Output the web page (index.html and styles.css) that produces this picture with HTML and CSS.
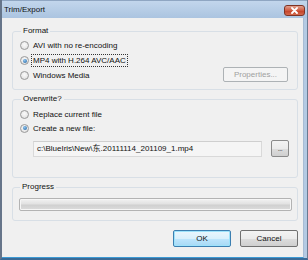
FILE: index.html
```html
<!DOCTYPE html>
<html>
<head>
<meta charset="utf-8">
<link rel="stylesheet" href="styles.css">
</head>
<body>
<div class="window">
  <div class="titlebar">
    <span class="title">Trim/Export</span>
    <span class="close"><svg width="11" height="7" viewBox="0 0 11 7"><path d="M3 1 L8 6 M8 1 L3 6" stroke="#fff" stroke-width="1.8" stroke-linecap="round"/></svg></span>
  </div>
  <div class="client">
    <fieldset class="group format">
      <legend>Format</legend>
      <div class="row"><span class="radio"></span><span class="label">AVI with no re-encoding</span></div>
      <div class="row"><span class="radio checked"></span><span class="label focus">MP4 with H.264 AVC/AAC</span></div>
      <div class="row last"><span class="radio"></span><span class="label">Windows Media</span><span class="btn disabled props">Properties...</span></div>
    </fieldset>
    <fieldset class="group overwrite">
      <legend>Overwrite?</legend>
      <div class="row r14"><span class="radio"></span><span class="label">Replace current file</span></div>
      <div class="row r14"><span class="radio checked"></span><span class="label">Create a new file:</span></div>
      <div class="filerow">
        <div class="textbox">c:\BlueIris\New\东.20111114_201109_1.mp4</div>
        <span class="btn dots">...</span>
      </div>
    </fieldset>
    <fieldset class="group progress">
      <legend>Progress</legend>
      <div class="bar"></div>
    </fieldset>
    <div class="buttons">
      <span class="btn ok">OK</span>
      <span class="btn">Cancel</span>
    </div>
  </div>
</div>
</body>
</html>
```
FILE: styles.css
```css
html, body {
  margin: 0;
  padding: 0;
  background: #f0f0f0;
}
body {
  font-family: "Liberation Sans", Arial, sans-serif;
  font-size: 8px;
  color: #111;
}
.window {
  width: 308px;
  height: 260px;
  box-sizing: border-box;
  display: flex;
  flex-direction: column;
  background: #b4cae3;
  border-left: 2px solid #66758a;
  border-right: 1px solid #6a7a90;
  border-bottom: 2px solid #3a6a96;
}
.titlebar {
  height: 18px;
  flex: none;
  display: flex;
  align-items: center;
  justify-content: space-between;
  padding: 0 2px 0 2px;
  background: linear-gradient(#c2d6ec, #abc4e0);
  border-top: 1px solid #8fa6c2;
  box-sizing: border-box;
}
.title {
  color: #101010;
  line-height: 10px;
}
.close {
  width: 21px;
  height: 11px;
  box-sizing: border-box;
  border: 1px solid #7e3324;
  border-radius: 3px;
  background: linear-gradient(#e0a08f, #cf5a40 50%, #c23e25 51%, #d46a4e);
  display: flex;
  align-items: center;
  justify-content: center;
  margin-top: 1px;
}
.client {
  flex: 1;
  background: #f0f0f0;
  margin: 0 3px 0 0;
  border-right: 1px solid #a8bcd4;
  border-bottom: 1px solid #3d9ad4;
  padding: 8px 5px 0 10px;
  display: flex;
  flex-direction: column;
}
.group {
  margin: 0;
  border: 1px solid #d8dfe6;
  border-radius: 3px;
  padding: 2px 0 0 7px;
  min-width: 0;
}
.group legend {
  padding: 0 2px;
  margin-left: 1px;
  line-height: 10px;
  color: #111;
}
.format {
  padding-bottom: 6px;
}
.overwrite {
  margin-top: 4px;
  padding-top: 3px;
  padding-bottom: 20px;
}
.progress {
  margin-top: 4px;
  padding: 6px 5px 9px 6px;
}
.row {
  display: flex;
  align-items: center;
  height: 15px;
}
.row.r14 {
  height: 14px;
}
.radio {
  width: 9px;
  height: 9px;
  box-sizing: border-box;
  border-radius: 50%;
  border: 1px solid #9a9a9a;
  background: radial-gradient(circle at 50% 40%, #fbfbfb, #dcdcdc);
  display: inline-flex;
  align-items: center;
  justify-content: center;
  margin-right: 2px;
  flex: none;
}
.radio.checked::after {
  content: "";
  width: 4px;
  height: 4px;
  border-radius: 50%;
  background: radial-gradient(circle at 40% 35%, #8ec4ee, #1c5e9e);
}
.label {
  line-height: 11px;
  padding: 0 1px;
  border: 1px dotted transparent;
}
.label.focus {
  border-color: #333;
}
.btn {
  display: inline-flex;
  align-items: center;
  justify-content: center;
  box-sizing: border-box;
  height: 16px;
  border: 1px solid #707070;
  border-radius: 2px;
  background: linear-gradient(#f3f3f3, #ebebeb 50%, #dddddd 51%, #cfcfcf);
  color: #111;
}
.btn.disabled {
  border-color: #adb2b5;
  background: #f4f4f4;
  color: #a0a0a0;
}
.props {
  margin-left: auto;
  margin-right: 9px;
  width: 65px;
  height: 15px;
  margin-top: -3px;
}
.filerow {
  display: flex;
  align-items: center;
  margin-top: 5px;
  padding-left: 13px;
}
.textbox {
  width: 229px;
  height: 16px;
  box-sizing: border-box;
  border: 1px solid #d9d9d9;
  border-top-color: #cfcfcf;
  background: #f5f5f5;
  padding-left: 3px;
  line-height: 14px;
  white-space: nowrap;
  font-family: "Liberation Sans", "Noto Sans CJK SC", sans-serif;
  color: #111;
}
.dots {
  width: 18px;
  height: 17px;
  margin-left: 9px;
  color: #333;
  font-size: 7px;
  line-height: 7px;
  letter-spacing: -0.5px;
  border-color: #8a8a8a;
}
.bar {
  height: 13px;
  box-sizing: border-box;
  border: 1px solid #b3b3b3;
  border-radius: 2px;
  background: linear-gradient(#f2f2f2, #e2e2e2 45%, #d0d0d0 55%, #dcdcdc);
  box-shadow: inset 0 0 0 1px #f6f6f6;
}
.buttons {
  display: flex;
  justify-content: flex-end;
  gap: 9px;
  margin-top: 9px;
  padding-right: 0;
}
.buttons .btn {
  width: 58px;
  height: 17px;
}
.btn.ok {
  border-color: #3c7fb1;
  background: linear-gradient(#eaf6fd, #d9f0fc 50%, #bee6fd 51%, #a7d9f5);
  box-shadow: inset 0 0 0 1px #9ee3fb;
}
```
